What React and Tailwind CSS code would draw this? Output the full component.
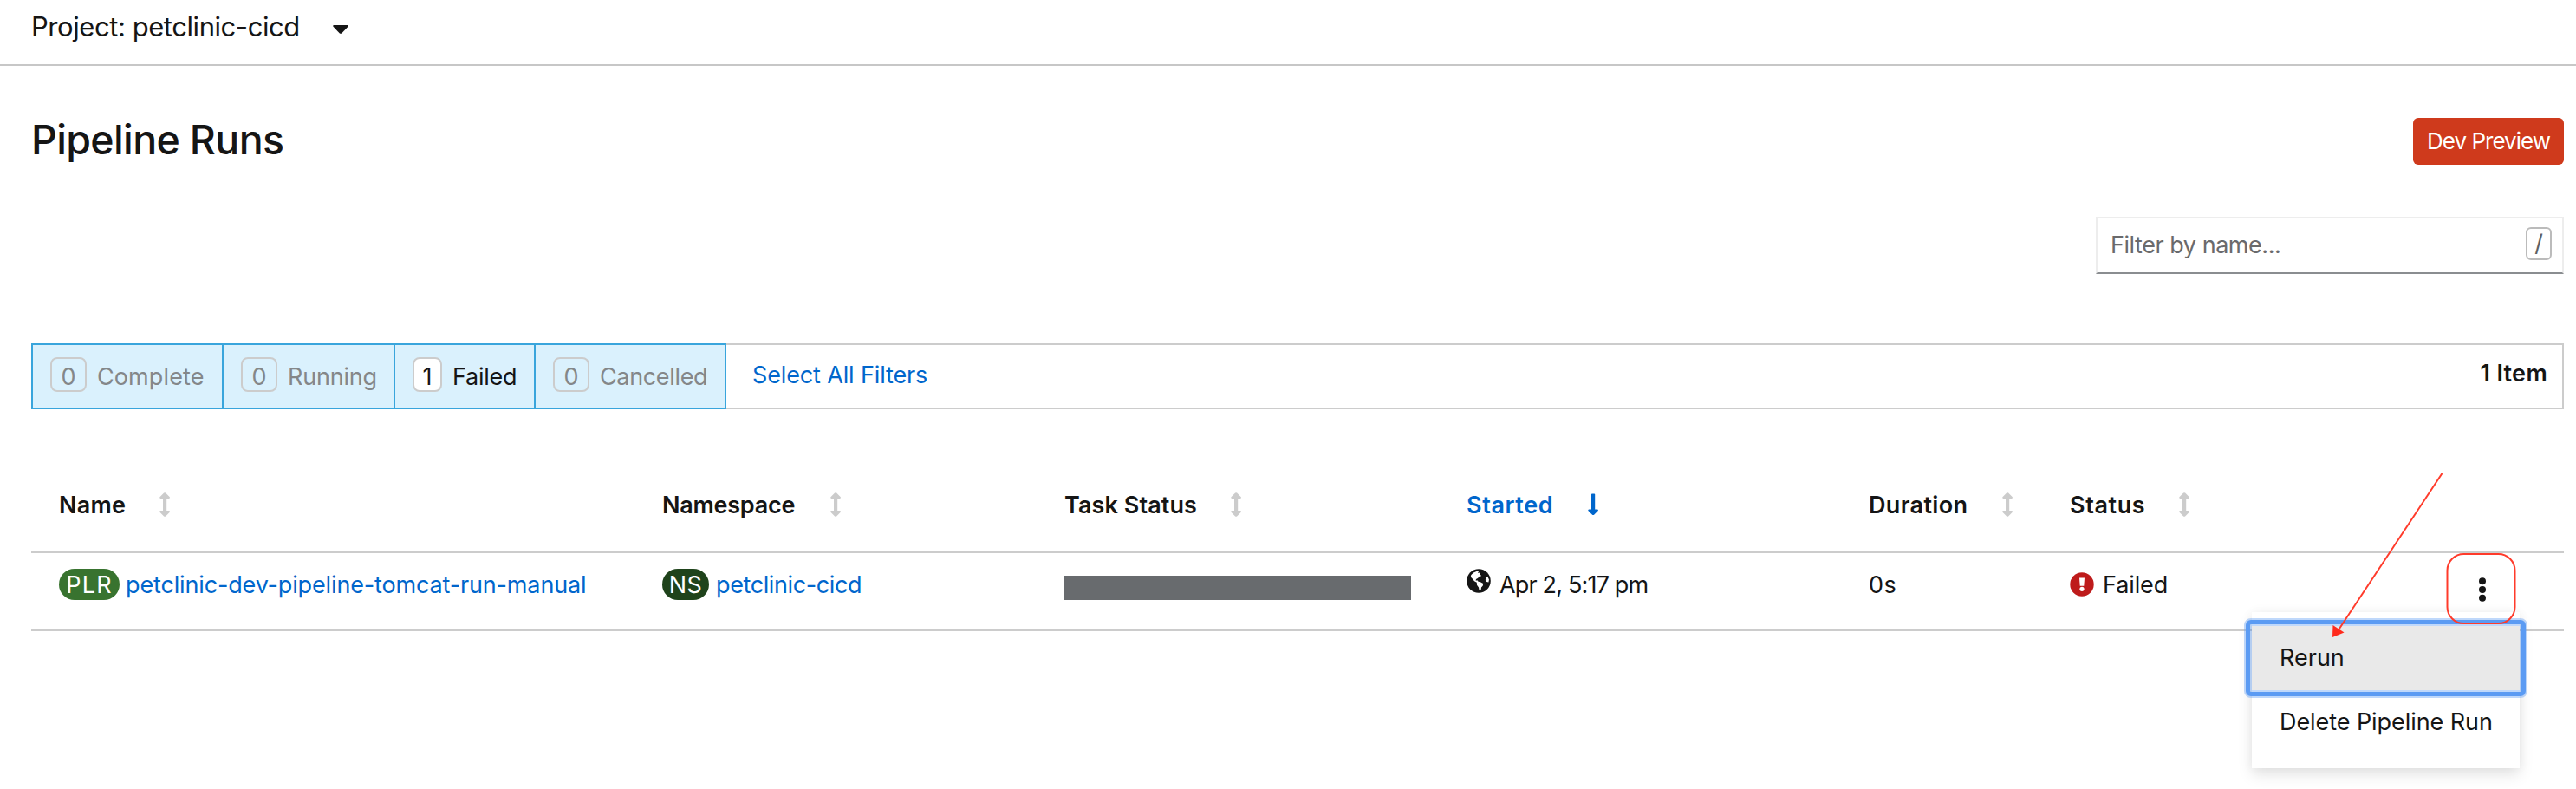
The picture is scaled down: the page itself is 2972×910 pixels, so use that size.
import React from "react";

const columns = [
  { label: "Name", style: "w-[108px] tracking-[0.23px]" },
  { label: "Namespace", style: "w-[186px] tracking-[-0.25px]" },
  { label: "Task Status", style: "w-[184px] tracking-[0.09px]" },
  { label: "Started", style: "w-[132px] tracking-[0.6px]", sorted: true },
  { label: "Duration", style: "w-[146px] tracking-[0.35px]" },
  { label: "Status", style: "w-[118px] tracking-[0.6px]" },
];

const filters = [
  { count: 0, label: "Complete", style: "w-[222px] border-l-2", text: "tracking-[0.1px]" },
  { count: 0, label: "Running", style: "w-[198px]", text: "tracking-[-0.2px]" },
  { count: 1, label: "Failed", style: "w-[162px]", text: "tracking-[-0.25px]", active: true },
  { count: 0, label: "Cancelled", style: "w-[220px]", text: "tracking-[-0.35px]" },
];

const grid = "grid grid-cols-[696px_464px_464px_464px_232px_1fr] pl-8";

function SortIcon({ sorted }) {
  return (
    <svg viewBox="0 0 28 28" className={`size-7 ${sorted ? "" : "text-[#ccc]"}`} fill="currentColor">
      {sorted ? (
        <path d="M12 2.300q0-.8.800-.8h2.600q.8 0 .8.800v17.200h2.800q1.500.1.8 1.500l-4.700 4.700q-1 .700-2 0l-4.700-4.700q-.7-1.400.8-1.500H12Z" />
      ) : (
        <path d="M13.100.5q1-.7 2 0l4.700 4.800q.6 1.400-.8 1.600H16.200v14.200H19q1.400.2.8 1.600l-4.700 4.800q-1 .7-2 0l-4.700-4.800q-.6-1.400.8-1.600H12V6.900H9.200Q7.800 6.700 8.400 5.300Z" />
      )}
    </svg>
  );
}

function GlobeIcon() {
  return (
    <svg viewBox="0 0 28 28" className="-mt-9 size-7 shrink-0 translate-y-[14px]">
      <circle cx="14" cy="14" r="13.800" fill="#151515" />
      <path
        fill="#fff"
        d="M4.800 9.500 5.200 7.200 8 4.600 11.500 2.900 14 3 13 5 15 4.600 15.600 6.500 17.200 8.200 14.800 8.800 13.200 10.800 11 12 10.600 13.400 13 13.600 13.400 14.800 16 15.200 19.200 17 18.800 19.600 17 21.400 16.600 24.400 14.600 25 14 21.500 12 18.800 11.800 15.800 9 14.200 7 11.800Z"
      />
      <path fill="#fff" d="M24.200 8.800 22.300 10.400 21.800 13 23.200 15 25.400 15.400 26 12.500Z" />
    </svg>
  );
}

function StatusFilters() {
  return (
    <div className="mt-20 flex h-[76px]">
      {filters.map((f) => (
        <button
          key={f.label}
          className={`flex items-center border-y-2 border-r-2 border-[#39a5dc] bg-[#daf1fd] pl-5 ${f.style} ${
            f.active ? "text-[#151515]" : "text-[#848789]"
          }`}
        >
          <span
            className={`-mt-1 flex h-10 items-center justify-center rounded-lg border-2 border-[#ccc] pt-1.5 ${
              f.active ? "w-[34px] bg-white" : "w-[42px]"
            }`}
          >
            {f.count}
          </span>
          <span className={`ml-3 mt-0.5 ${f.text}`}>{f.label}</span>
        </button>
      ))}
      <div className="flex flex-1 items-center justify-between border-y-2 border-r-2 border-[#ccc] pb-0.5 pl-[30px] pr-[17px]">
        <a className="tracking-[-0.14px] text-[#06c]">Select All Filters</a>
        <span className="-mt-1 font-semibold tracking-[0.3px]">1 Item</span>
      </div>
    </div>
  );
}

function ActionMenu() {
  return (
    <div className="absolute left-[2598px] top-[706px] h-[180px] w-[309px] bg-white pt-4 shadow-[0_8px_16px_rgba(3,3,3,0.1),0_0_12px_rgba(3,3,3,0.05)]">
      <div className="relative flex h-[74px] items-center bg-[#e9e9e9] pb-px pl-8">
        Rerun
        <div className="absolute -inset-[9px] rounded-[8px] border-[9px] border-[#5f9df5]/40" />
        <div className="absolute -inset-[7px] rounded-[6px] border-[5px] border-[#5b9bf3]" />
      </div>
      <div className="flex h-[74px] items-center pb-px pl-8 tracking-[-0.07px]">Delete Pipeline Run</div>
    </div>
  );
}

function Annotations() {
  return (
    <svg className="absolute left-0 top-0 h-[910px] w-[2972px]" viewBox="0 0 2972 910" fill="none">
      <rect x="2823.500" y="639" width="78" height="80" rx="19" stroke="#ff3b2b" strokeWidth="2" />
      <path d="M2817.500 546 2697 728" stroke="#ff3b2b" strokeWidth="2" />
      <path d="M2691 735 2691.500 721 2704.500 729.500Z" fill="#ff2a1c" />
    </svg>
  );
}

export default function App() {
  return (
    <div className="relative h-[910px] w-[2972px] overflow-hidden bg-white font-['Inter',sans-serif] text-[27px] leading-9 text-[#151515]">
      <header className="flex h-[76px] items-center border-b-2 border-[#c7c7c7] pb-3 pl-9">
        <span className="text-[31px] tracking-[-0.44px]">Project: petclinic-cicd</span>
        <svg viewBox="0 0 20 12" className="ml-[37px] mt-[5px] h-3 w-5">
          <path d="M2.200 1h15.600q1.800.2.700 1.700l-7.100 7.500q-1.400 1.300-2.800 0L1.500 2.700Q.4 1.200 2.200 1Z" fill="#151515" />
        </svg>
      </header>
      <main className="pl-9 pr-[14px] pt-[60px]">
        <div className="flex h-[54px] items-center justify-between">
          <h1 className="-mt-1 text-[46.5px] font-[550] tracking-[-0.65px]">Pipeline Runs</h1>
          <span className="flex h-[54px] w-[174px] items-center justify-center rounded-md bg-[#cf3a1c] text-[26px] tracking-[-1px] text-white">
            Dev Preview
          </span>
        </div>
        <div className="ml-auto mt-[60px] flex h-[66px] w-[540px] items-start border-2 border-[#ededed] border-b-[#8a8d90] pl-[15px] pr-3">
          <span className="mt-[13px] flex-1 tracking-[-0.46px] text-[#6a6a6c]">Filter by name...</span>
          <kbd className="mt-[10px] flex h-[38px] w-[30px] items-center justify-center rounded-md border-2 border-[#bbb] font-['Inter'] text-[#5d6063]">
            /
          </kbd>
        </div>
        <StatusFilters />
        <section className="mt-14">
          <div className={`${grid} h-[110px] items-center border-b-2 border-[#ccc] font-semibold`}>
            {columns.map((c) => (
              <div key={c.label} className={`flex items-center ${c.sorted ? "text-[#06c]" : ""}`}>
                <span className={`mt-0.5 ${c.style}`}>{c.label}</span>
                <SortIcon sorted={c.sorted} />
              </div>
            ))}
          </div>
          <div className={`${grid} relative h-[90px] grid-rows-[72px] items-center border-b-2 border-[#ccc]`}>
            <div className="flex items-center">
              <span className="flex h-9 w-[70px] items-center justify-center rounded-[18px] bg-[#38732f] pt-px tracking-[1.2px] text-white">
                PLR
              </span>
              <a className="ml-[7px] mt-px tracking-[-0.15px] text-[#06c]">petclinic-dev-pipeline-tomcat-run-manual</a>
            </div>
            <div className="flex items-center">
              <span className="flex h-9 w-[54px] items-center justify-center rounded-[18px] bg-[#1f431b] pt-px tracking-[0.5px] text-white">
                NS
              </span>
              <a className="ml-2 mt-px tracking-[-0.39px] text-[#06c]">petclinic-cicd</a>
            </div>
            <div className="mt-2 h-7 w-[400px] bg-[#686b6e]" />
            <div className="flex items-center">
              <GlobeIcon />
              <span className="ml-[10px] mt-px tracking-[-0.83px]">Apr 2, 5:17 pm</span>
            </div>
            <div className="mt-px tracking-[0.5px]">0s</div>
            <div className="flex items-center">
              <svg viewBox="0 0 28 28" className="size-7">
                <circle cx="14" cy="14" r="13.700" fill="#be1b1b" />
                <path d="M11 6.500h6l-.7 9.200h-4.600Z" fill="#fff" />
                <circle cx="14" cy="19.300" r="2.600" fill="#fff" />
              </svg>
              <span className="ml-[10px] mt-px tracking-[-0.1px]">Failed</span>
            </div>
            <svg viewBox="0 0 8 28" className="absolute left-[2824px] top-7 h-7 w-2" fill="#151515">
              <circle cx="4" cy="4.300" r="4" />
              <circle cx="4" cy="14" r="4" />
              <circle cx="4" cy="23.700" r="4" />
            </svg>
          </div>
        </section>
      </main>
      <ActionMenu />
      <Annotations />
    </div>
  );
}
